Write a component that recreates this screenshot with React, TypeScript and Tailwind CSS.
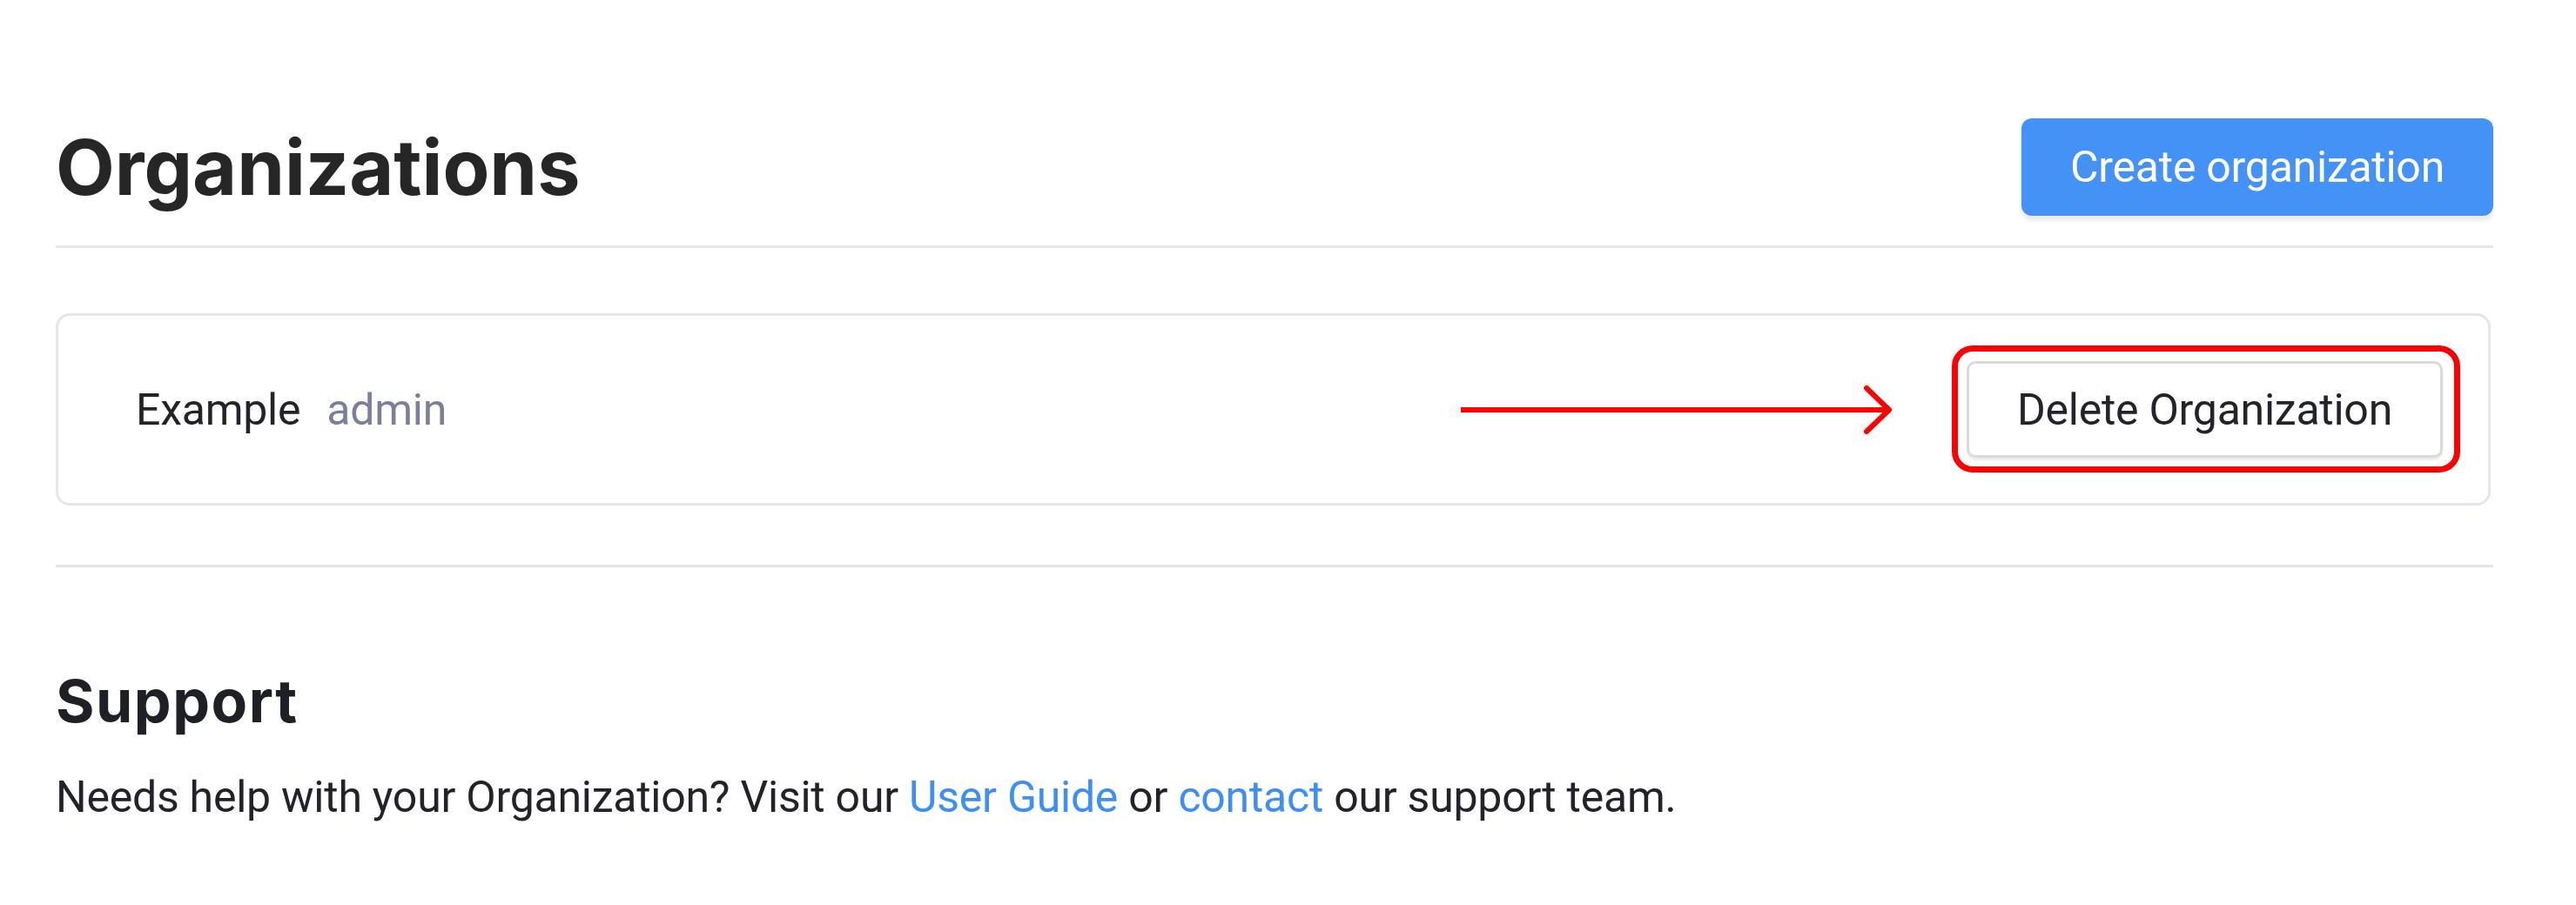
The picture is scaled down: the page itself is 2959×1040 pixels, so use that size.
import React from "react";

const body = { fontFamily: "Roboto, 'Liberation Sans', sans-serif" };
const head = { fontFamily: "Inter, 'Noto Sans', sans-serif" };

function Arrow() {
    return (
        <svg width="496" height="60" viewBox="0 0 496 60" className="shrink-0 mr-[85px]">
            <line x1="0" y1="30" x2="492" y2="30" stroke="#ff0000" strokeWidth="6" />
            <polyline points="466,5 492,30 466,55" fill="none" stroke="#ff0000" strokeWidth="6" strokeLinecap="round" strokeLinejoin="round" />
        </svg>
    );
}

export default function App() {
    return (
        <div className="min-h-[1040px] bg-white tracking-[-0.25px]" style={body}>
            <div className="ml-[64px] w-[2800px] pt-[136px]">
                {/* Header */}
                <div className="flex items-center justify-between h-[112px]">
                    <h1 className="text-[88px] leading-none font-bold text-[#262626] tracking-[0px]" style={head}>
                        Organizations
                    </h1>
                    <button className="h-[112px] px-[56px] rounded-[12px] bg-[#4592f6] text-white text-[50px] leading-none shadow-[0_6px_4px_rgba(0,0,0,0.08)]">
                        Create organization
                    </button>
                </div>
                <div className="mt-[34px] h-[3px] bg-[#e6e6e6]" />

                {/* Org card */}
                <div className="mt-[75px] h-[221px] w-[2797px] border-[3px] border-[#e5e6eb] rounded-[16px] flex items-center pl-[89px] pr-[52px]">
                    <span className="text-[50px] leading-none text-[#23242a]">Example</span>
                    <span className="ml-[30px] text-[50px] leading-none text-[#7c7f9c]">admin</span>
                    <div className="ml-auto flex items-center">
                        <Arrow />
                        <div className="relative">
                            <span className="absolute -top-[18px] -bottom-[17px] -left-[17px] -right-[20px] border-[7px] border-[#ff0000] rounded-[24px]" />
                            <button className="relative h-[111px] px-[55px] bg-white border-[3px] border-[#dadada] rounded-[10px] text-[50px] leading-none text-[#23242b] shadow-[0_3px_2px_rgba(0,0,0,0.08)]">
                                Delete Organization
                            </button>
                        </div>
                    </div>
                </div>
                <div className="mt-[68px] h-[3px] bg-[#e6e6e6]" />

                {/* Support */}
                <h2 className="mt-[119px] text-[68px] leading-none font-bold text-[#1f2026] tracking-[1.5px]" style={head}>
                    Support
                </h2>
                <p className="mt-[52px] text-[50px] leading-none text-[#22232a]">
                    Needs help with your Organization? Visit our{" "}
                    <a className="text-[#3e8ef7]">User Guide</a> or{" "}
                    <a className="text-[#3e8ef7]">contact</a> our support team.
                </p>
            </div>
        </div>
    );
}
